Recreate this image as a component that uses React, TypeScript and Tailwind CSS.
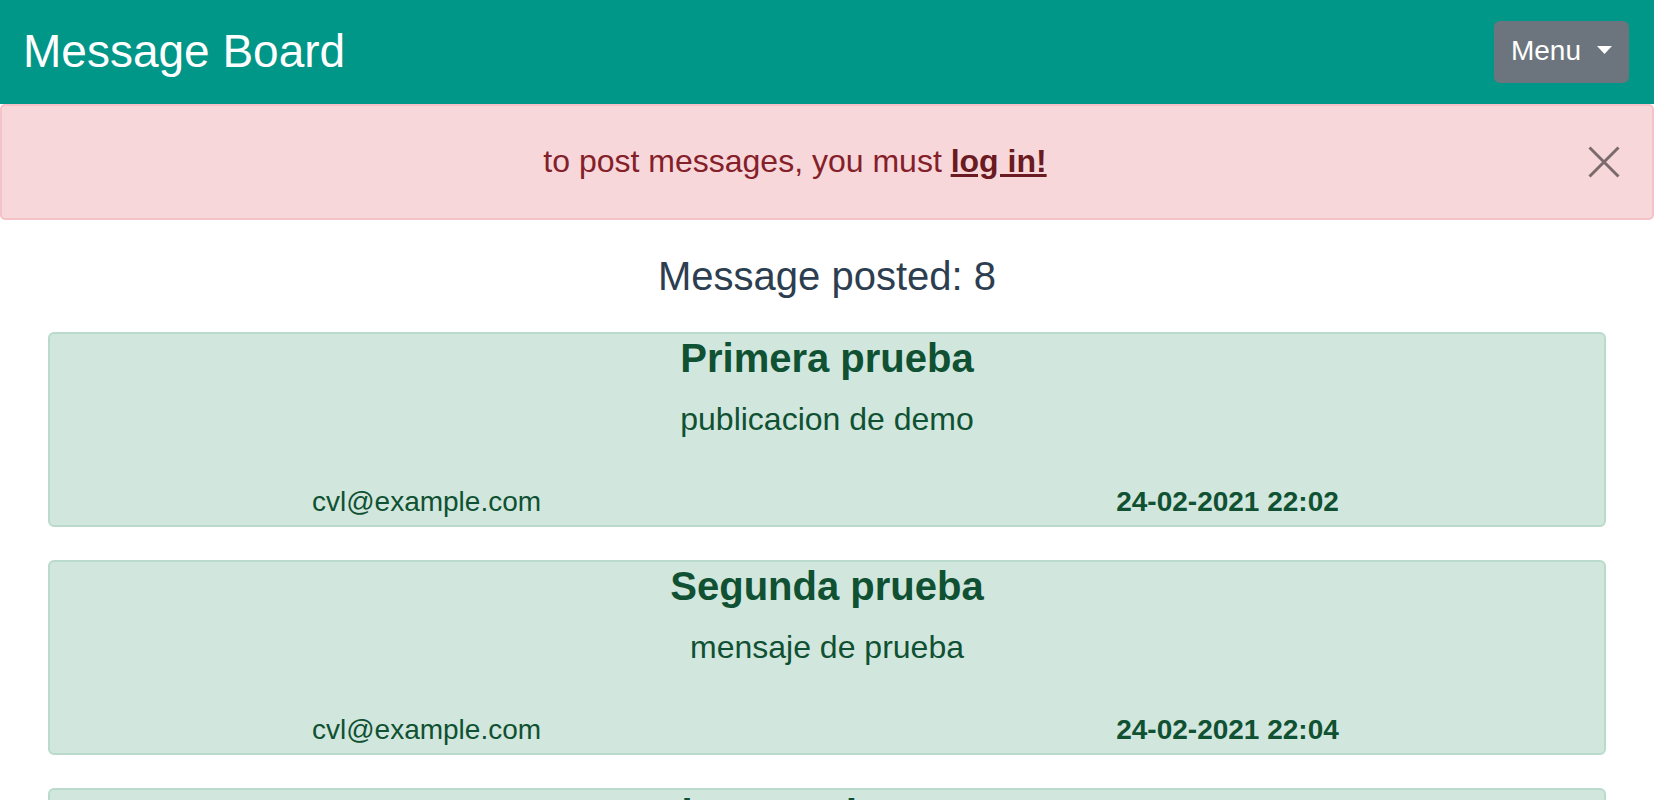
interface Message {
  id: number;
  title: string;
  body: string;
  author: string;
  date: string;
}

const messages: Message[] = [
  { id: 1, title: "Primera prueba", body: "publicacion de demo", author: "cvl@example.com", date: "24-02-2021 22:02" },
  { id: 2, title: "Segunda prueba", body: "mensaje de prueba", author: "cvl@example.com", date: "24-02-2021 22:04" },
  { id: 3, title: "Prueba usando Postman", body: "enviado desde la API", author: "cvl@example.com", date: "24-02-2021 22:10" },
  { id: 4, title: "Cuarta prueba", body: "otro mensaje", author: "cvl@example.com", date: "25-02-2021 09:15" },
  { id: 5, title: "Quinta prueba", body: "hola a todos", author: "cvl@example.com", date: "25-02-2021 10:31" },
  { id: 6, title: "Sexta prueba", body: "mensaje de prueba", author: "cvl@example.com", date: "25-02-2021 11:02" },
  { id: 7, title: "Septima prueba", body: "publicacion de demo", author: "cvl@example.com", date: "26-02-2021 18:44" },
  { id: 8, title: "Octava prueba", body: "ultimo mensaje", author: "cvl@example.com", date: "26-02-2021 19:20" },
];

/** Barra superior con el nombre y el menú desplegable */
function Navbar() {
  return (
    <nav className="flex h-[104px] items-center justify-between bg-[#009688] pl-[23px] pr-[25px]">
      <span className="mb-[2px] text-[46px] leading-[56px] text-white">Message Board</span>
      <button
        type="button"
        className="flex h-[62px] items-center rounded-[6px] bg-[#6c757d] pl-[17px] pr-[17px] text-[28px] leading-[34px] text-white"
      >
        <span className="mb-[2px]">Menu</span>
        <svg width="15" height="8" viewBox="0 0 15 8" className="mb-[4px] ml-[16px]">
          <path d="M0 0H15L7.5 8Z" fill="white" />
        </svg>
      </button>
    </nav>
  );
}

/** Aviso para usuarios sin sesión */
function LoginAlert() {
  return (
    <div className="flex h-[116px] items-center rounded-[5px] border-2 border-[#f5c2c7] bg-[#f8d7da] px-[32px] text-[#842029]">
      <p className="mb-[2px] flex-1 text-center text-[32px] leading-[38px]">
        to post messages, you must{" "}
        <a href="#" className="font-bold text-[#6a1a21] underline">
          log in!
        </a>
      </p>
      <button type="button" aria-label="Close" className="ml-[32px] h-[32px] w-[32px] opacity-50">
        <svg width="32" height="32" viewBox="0 0 32 32">
          <path d="M1.5 1.5L30.5 30.5M30.5 1.5L1.5 30.5" stroke="black" strokeWidth="3" />
        </svg>
      </button>
    </div>
  );
}

function MessageCard({ message }: { message: Message }) {
  return (
    <div className="mb-[33px] rounded-[6px] border-2 border-[#badbcc] bg-[#d1e7dd] pb-[2px] text-[#0f5132]">
      <h5 className="text-[40px] font-bold leading-[48px]">{message.title}</h5>
      <p className="mt-[13px] text-[32px] leading-[48px]">{message.body}</p>
      <div className="-mx-[24px] mt-[38px] grid grid-cols-2 text-[28px] leading-[42px]">
        <span>{message.author}</span>
        <span className="font-bold">{message.date}</span>
      </div>
    </div>
  );
}

export default function App() {
  const visible = messages.slice(0, 3);

  return (
    <div className="min-h-screen bg-white text-center font-['Liberation_Sans',Arial,sans-serif] text-[#2c3e50]">
      <Navbar />
      <LoginAlert />
      <h5 className="mt-[32px] text-[40px] leading-[48px]">Message posted: {messages.length}</h5>
      <div className="mx-[48px] mt-[32px]">
        {visible.map((m) => (
          <MessageCard key={m.id} message={m} />
        ))}
      </div>
    </div>
  );
}
